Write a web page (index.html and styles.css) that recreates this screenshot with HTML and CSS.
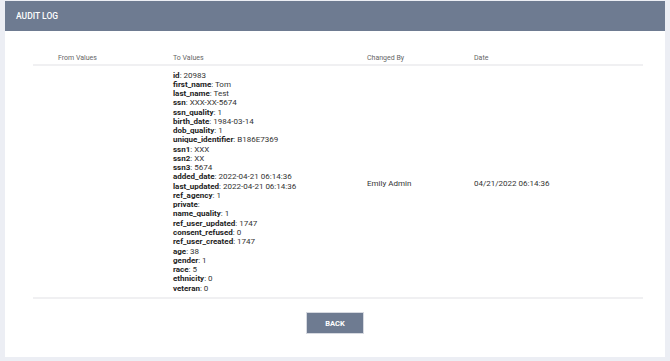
FILE: index.html
```html
<!DOCTYPE html>
<html>
<head>
<meta charset="utf-8">
<link rel="stylesheet" href="styles.css">
</head>
<body>
<div class="card">
  <div class="card-header">AUDIT LOG</div>
  <div class="table">
    <div class="row head">
      <div class="cell c1">From Values</div>
      <div class="cell c2">To Values</div>
      <div class="cell c3">Changed By</div>
      <div class="cell c4">Date</div>
    </div>
    <div class="row body">
      <div class="cell c1"></div>
      <div class="cell c2">
        <ul class="vals">
          <li><b>id</b>: 20983</li>
          <li><b>first_name</b>: Tom</li>
          <li><b>last_name</b>: Test</li>
          <li><b>ssn</b>: XXX-XX-5674</li>
          <li><b>ssn_quality</b>: 1</li>
          <li><b>birth_date</b>: 1984-03-14</li>
          <li><b>dob_quality</b>: 1</li>
          <li><b>unique_identifier</b>: B186E7369</li>
          <li><b>ssn1</b>: XXX</li>
          <li><b>ssn2</b>: XX</li>
          <li><b>ssn3</b>: 5674</li>
          <li><b>added_date</b>: 2022-04-21 06:14:36</li>
          <li><b>last_updated</b>: 2022-04-21 06:14:36</li>
          <li><b>ref_agency</b>: 1</li>
          <li><b>private</b>:</li>
          <li><b>name_quality</b>: 1</li>
          <li><b>ref_user_updated</b>: 1747</li>
          <li><b>consent_refused</b>: 0</li>
          <li><b>ref_user_created</b>: 1747</li>
          <li><b>age</b>: 38</li>
          <li><b>gender</b>: 1</li>
          <li><b>race</b>: 5</li>
          <li><b>ethnicity</b>: 0</li>
          <li><b>veteran</b>: 0</li>
        </ul>
      </div>
      <div class="cell c3 mid">Emily Admin</div>
      <div class="cell c4 mid">04/21/2022 06:14:36</div>
    </div>
  </div>
  <div class="actions">
    <button class="btn">BACK</button>
  </div>
</div>
</body>
</html>
```
FILE: styles.css
```css
html, body {
  margin: 0;
  padding: 0;
}
body {
  background: #eceef4;
  font-family: Roboto, "Liberation Sans", Arial, sans-serif;
  padding-top: 1px;
  width: 670px;
  height: 361px;
  box-sizing: border-box;
  overflow: hidden;
}
.card {
  margin-left: 5px;
  width: 660px;
  height: 356px;
  background: #ffffff;
}
.card-header {
  height: 30px;
  background: #6e7b91;
  color: #ffffff;
  font-size: 8.5px;
  font-weight: 500;
  line-height: 30px;
  padding-left: 11px;
}
.table {
  margin: 21px 22px 0 28px;
}
.row {
  display: grid;
  grid-template-columns: 140px 194px 107px 169px;
  border-bottom: 2px solid #f0f0f2;
}
.head .cell {
  font-size: 7px;
  color: #666666;
  line-height: 12px;
}
.head .c1, .body .c1 {
  padding-left: 25px;
}
.body {
  padding: 4.5px 0;
  color: #333333;
  font-size: 8px;
}
.mid {
  align-self: center;
  padding-top: 4px;
}
.vals {
  list-style: none;
  margin: 0;
  padding: 0;
  line-height: 9.27px;
}
.vals b {
  font-weight: 700;
  color: #222222;
}
.actions {
  display: flex;
  justify-content: center;
  padding-top: 13px;
}
.btn {
  width: 58px;
  height: 22px;
  background: #6e7b91;
  color: #ffffff;
  border: 1px solid #d6d9e0;
  font-family: Roboto, "Liberation Sans", Arial, sans-serif;
  font-size: 7.5px;
  font-weight: 700;
  padding: 0;
  box-sizing: border-box;
}
```
